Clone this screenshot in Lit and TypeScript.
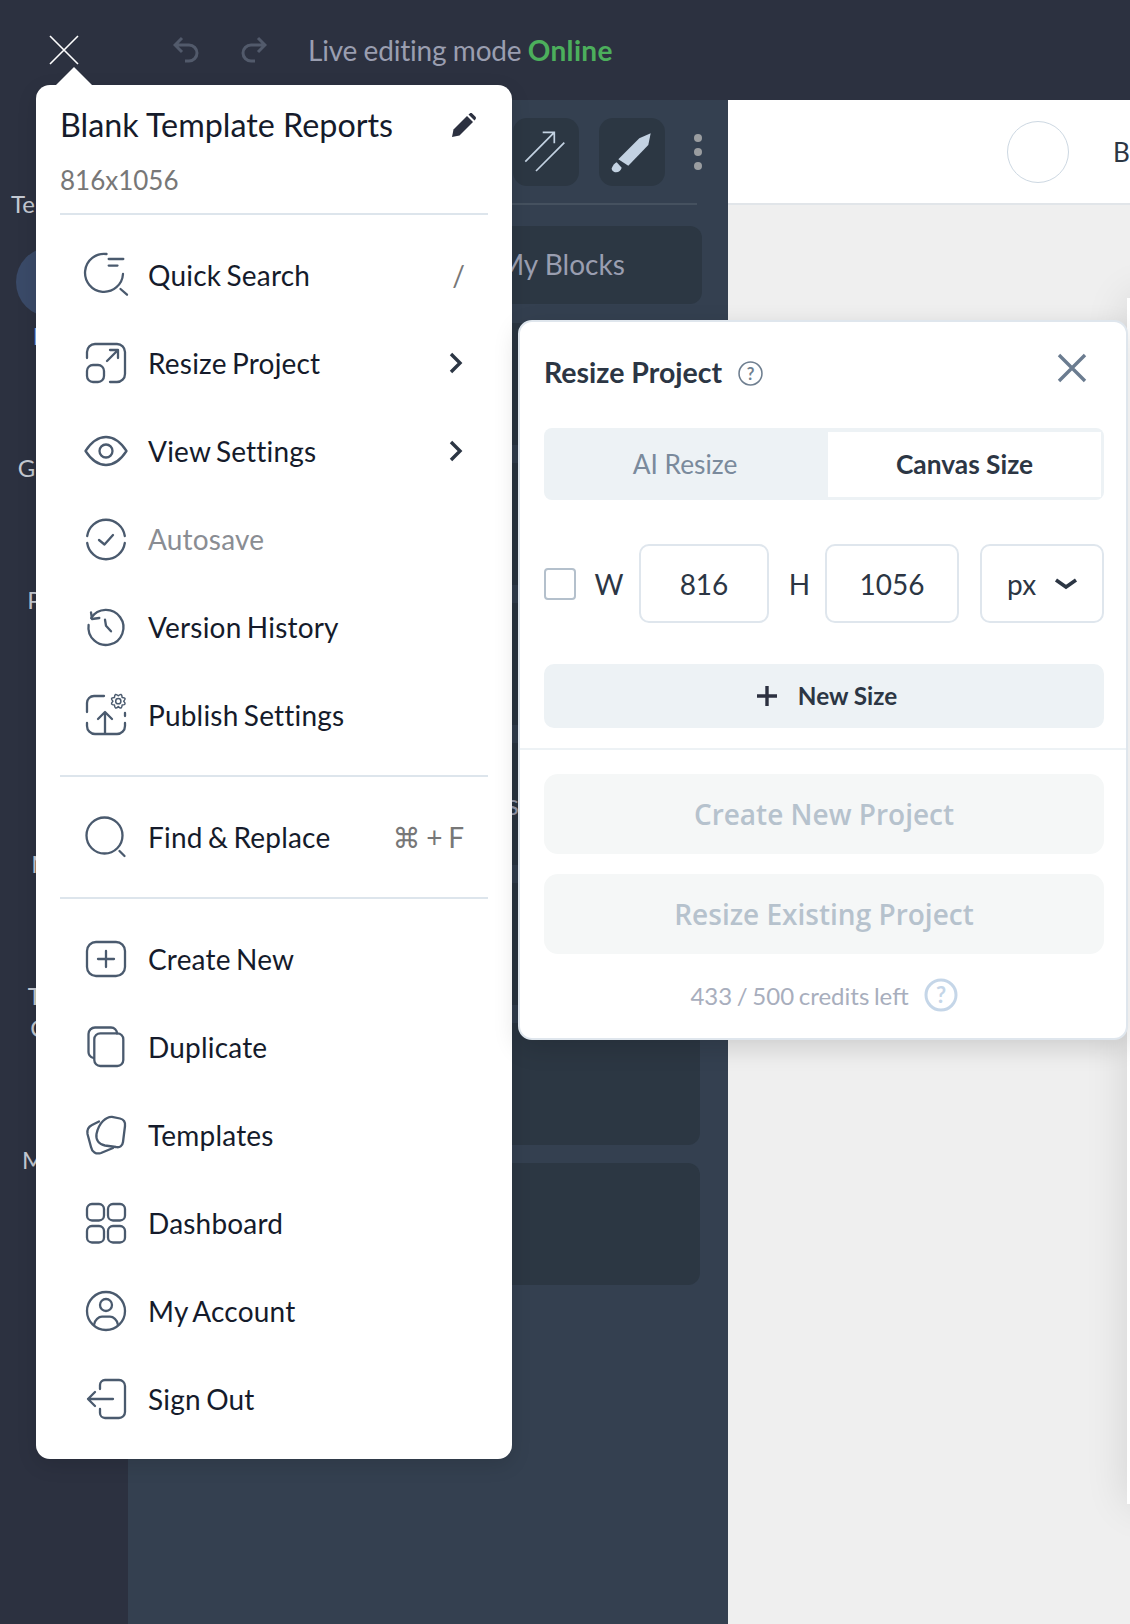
import { LitElement, css, html, svg } from 'lit';
import { customElement } from 'lit/decorators.js';

const icon = (body: unknown) => html`<svg class="ico" viewBox="-2 -2 44 44">${body}</svg>`;

const chevron = html`<svg class="chev" viewBox="0 0 16 24"><path d="M3 3 L12 12 L3 21" /></svg>`;

// eight lobed cog for the publish icon
const gearPath = (cx: number, cy: number) => {
  let d = '';
  for (let i = 0; i < 8; i++) {
    const a = (i * Math.PI) / 4;
    const b = a + Math.PI / 8;
    const c = a + Math.PI / 4;
    const p = (ang: number, r: number) => `${(cx + r * Math.cos(ang)).toFixed(2)} ${(cy + r * Math.sin(ang)).toFixed(2)}`;
    d += i === 0 ? `M${p(a, 5.4)} ` : '';
    d += `Q${p(b, 9.6)} ${p(c, 5.4)} `;
  }
  return d + 'Z';
};

type MenuItem = { label: string; icon: unknown; muted?: boolean; trail?: unknown };

const topItems: MenuItem[] = [
  {
    label: 'Quick Search',
    trail: html`<span class="key">/</span>`,
    icon: svg`<path d="M20.5 -1 A19 19 0 1 0 37 19" /><path d="M22.7 4 H37.3 M22.7 10.6 H31.5" /><path d="M34.5 34 L41 39.7" />`,
  },
  {
    label: 'Resize Project',
    trail: chevron,
    icon: svg`<path d="M1 15 V9 a8 8 0 0 1 8-8 H31 a8 8 0 0 1 8 8 V31 a8 8 0 0 1-8 8 H24" /><rect x="1" y="22" width="17" height="17" rx="6" /><path d="M21 18 L32 7 M24 7 H32 V15" />`,
  },
  {
    label: 'View Settings',
    trail: chevron,
    icon: svg`<path d="M-0.5 20 C6 10 13 6 20 6 C27 6 34 10 40.5 20 C34 30 27 34 20 34 C13 34 6 30 -0.5 20 Z" /><circle cx="20" cy="20" r="6.5" />`,
  },
  {
    label: 'Autosave',
    muted: true,
    icon: svg`<path d="M1.2 17 A19 19 0 0 1 38.8 17" /><path d="M38.8 24 A19 19 0 0 1 1.2 24" /><path d="M13 21 L18.5 25.5 L27 16" />`,
  },
  {
    label: 'Version History',
    icon: svg`<path d="M5.2 11 A17.5 17.5 0 1 1 2.6 18" /><path d="M5 5.3 L6 12 L13.3 11" /><path d="M19 12.7 L20 18.7 L25 24.3" />`,
  },
  {
    label: 'Publish Settings',
    icon: svg`<path d="M1 17 V8 a7 7 0 0 1 7-7 H18" /><path d="M39 18 V21" /><path d="M1 28 V31 a8 8 0 0 0 8 8 H31 a8 8 0 0 0 8-8 V28" /><path d="M19 38 V18 M12 24 L19 17 L26 24" /><circle class="gear" cx="32.3" cy="6.2" r="2.6" /><path class="gear" d="${gearPath(32.3, 6.2)}" />`,
  },
];

const bottomItems: MenuItem[] = [
  {
    label: 'Create New',
    icon: svg`<rect x="1" y="3" width="38" height="34" rx="9" /><path d="M20 12 V28 M12 20 H28" />`,
  },
  {
    label: 'Duplicate',
    icon: svg`<path d="M7.5 31 C4 30 2.5 28 2.5 25 V7 a6.5 6.5 0 0 1 6.5-6.5 H25 a6 6 0 0 1 6 6" /><rect x="8.3" y="6.3" width="29" height="32.7" rx="6" />`,
  },
  {
    label: 'Templates',
    icon: svg`<path d="M17 6 C20 3 22 1.5 26 1.8 L34 3.5 C38 4.5 39.5 7 39 11 L37 27 C36.5 31 33.5 33 30 32 L19 30.5 C13 29.5 9.5 25 10.5 19 C11.5 14 14 9 17 6 Z" /><path d="M13 6.5 L6 10 C2 12 0.8 15 1.5 19 L5 32 C6 37 10 39.5 15 38 L27 33" />`,
  },
  {
    label: 'Dashboard',
    icon: svg`<rect x="1" y="1" width="17" height="16.5" rx="5" /><rect x="22" y="1" width="17" height="16.5" rx="5" /><rect x="1" y="23" width="17" height="16.5" rx="5" /><rect x="22" y="23" width="17" height="16.5" rx="5" />`,
  },
  {
    label: 'My Account',
    icon: svg`<circle cx="20" cy="20" r="19" /><circle cx="20" cy="14" r="6" /><path d="M8 34 C8.5 28.5 13 25.7 16 25.7 H24 C27 25.7 31.5 28.5 32 34" />`,
  },
  {
    label: 'Sign Out',
    icon: svg`<path d="M14 10 V6 a5 5 0 0 1 5-5 H33 a6 6 0 0 1 6 6 V33 a6 6 0 0 1-6 6 H19 a5 5 0 0 1-5-5 V30" /><path d="M27 20 H2 M9 13 L2 20 L9 27" />`,
  },
];

const findItem: MenuItem = {
  label: 'Find & Replace',
  trail: html`<span class="key find">⌘ + F</span>`,
  icon: svg`<circle cx="18.5" cy="18.5" r="18" /><path d="M33.5 34 L38.5 39" />`,
};

const railItems = ['Templates', 'Brand', 'Graphics', 'Photos', 'Icons', 'Media', 'Theme Colors', 'Manage'];
const blocks = ['', '', '', 'Call to Actions', '', '', ''];

@customElement('app-root')
export class AppRoot extends LitElement {
  static styles = css`
    :host {
      display: block;
      position: relative;
      width: 1130px;
      height: 1624px;
      overflow: hidden;
      font-family: Lato, 'DejaVu Sans', sans-serif;
      background: #efefef;
    }

    .top {
      height: 100px;
      background: #2c3140;
      display: flex;
      align-items: center;
    }
    .top svg {
      fill: none;
      flex: none;
    }
    .close-main {
      width: 30px;
      height: 30px;
      margin-left: 49px;
      stroke: #fff;
      stroke-width: 1.6;
    }
    .undo {
      width: 28px;
      height: 28px;
      margin-left: 94px;
      stroke: #525a6b;
      stroke-width: 3;
    }
    .redo {
      margin-left: 38px;
      transform: scaleX(-1);
    }
    .live {
      margin-left: 41px;
      font-size: 28px;
      letter-spacing: -0.2px;
      word-spacing: -0.5px;
      color: #9a9eb0;
    }
    .live b {
      color: #4caf5c;
      letter-spacing: 0.3px;
    }

    .body {
      display: flex;
      height: 1524px;
    }

    .rail {
      width: 128px;
      flex: none;
      background: #2c3140;
    }
    .rail-item {
      padding-top: 100px;
      font-size: 24px;
      line-height: 32px;
      text-align: center;
      color: #c4c9d2;
    }
    .rail-item:first-child {
      padding-top: 88px;
    }
    .rail-item.active {
      padding-top: 27px;
      color: #8fb4e8;
    }
    .rail-mark {
      width: 70px;
      height: 70px;
      margin: 0 0 3px 16px;
      border-radius: 50%;
      background: #3a4a68;
    }
    .rail-item span {
      display: block;
      width: min-content;
      margin: 0 auto;
    }

    .panel {
      width: 600px;
      flex: none;
      box-sizing: border-box;
      padding: 18px 0 0 20px;
      background: #344050;
    }
    .tools {
      display: flex;
      align-items: center;
      justify-content: flex-end;
      gap: 20px;
      padding-right: 31px;
    }
    .tool {
      width: 66px;
      height: 68px;
      border-radius: 14px;
      background: #2c3743;
      display: flex;
      align-items: center;
      justify-content: center;
    }
    .tool svg {
      width: 48px;
      height: 48px;
      fill: none;
      stroke: #c3d2e2;
      stroke-width: 1.7;
    }
    .tool svg.solid {
      fill: #c3d2e2;
      stroke: none;
    }
    .dots {
      display: flex;
      flex-direction: column;
      gap: 6px;
      margin-left: 9px;
      margin-right: -5px;
    }
    .dots i {
      width: 8px;
      height: 8px;
      border-radius: 50%;
      background: #9a9da0;
    }
    .sep {
      height: 2px;
      margin: 17px 31px 0 0;
      background: #45515f;
    }
    .seg {
      display: flex;
      height: 78px;
      margin: 21px 26px 0 0;
      border-radius: 12px;
      background: #2c3743;
      font-size: 28px;
      color: #9a9eb0;
    }
    .seg span {
      flex: 1;
      display: flex;
      align-items: center;
      justify-content: center;
      padding: 0 4px 2px 0;
    }
    .blocks {
      display: flex;
      flex-direction: column;
      gap: 18px;
      margin: 19px 28px 0 0;
    }
    .block {
      height: 122px;
      padding-left: 12px;
      border-radius: 12px;
      background: #2c3743;
      display: flex;
      align-items: center;
      justify-content: center;
      font-size: 28px;
      color: #9a9eb0;
    }

    .main {
      flex: 1;
      min-width: 0;
      overflow: hidden;
      background: #efefef;
    }
    .bar {
      height: 103px;
      box-sizing: content-box;
      background: #fff;
      border-bottom: 2px solid #e1e5e9;
      display: flex;
      align-items: center;
      padding-left: 279px;
      gap: 44px;
      font-size: 26px;
      color: #2c3644;
      white-space: nowrap;
    }
    .avatar {
      width: 62px;
      height: 62px;
      flex: none;
      box-sizing: border-box;
      border: 1px solid #cdd8e2;
      border-radius: 50%;
    }
    .page {
      width: 816px;
      height: 1206px;
      margin: 93px 0 0 399px;
      background: #fff;
      box-shadow: 0 0 40px rgba(0, 0, 0, 0.12);
    }

    /* project menu, drops from the close button */
    .menu {
      position: absolute;
      left: 36px;
      top: 85px;
      width: 476px;
      box-sizing: border-box;
      padding: 0 24px 16px;
      background: #fff;
      border-radius: 14px;
      box-shadow: 0 6px 20px rgba(0, 0, 0, 0.12);
    }
    .menu::before {
      content: '';
      position: absolute;
      left: 20px;
      top: -18px;
      border-left: 18px solid transparent;
      border-right: 18px solid transparent;
      border-bottom: 18px solid #fff;
    }
    .menu-head {
      display: flex;
      align-items: center;
      justify-content: space-between;
      height: 78px;
      color: #151b2b;
      font-size: 32.3px;
    }
    .pencil {
      width: 24px;
      height: 24px;
      margin: 2px 12px 0 0;
      fill: #2c3140;
    }
    .menu-size {
      font-size: 26px;
      line-height: 28px;
      color: #777;
      margin-top: 3px;
      padding-bottom: 19px;
    }
    .menu hr {
      height: 2px;
      margin: 0;
      border: 0;
      background: #dde5ec;
    }
    .group {
      padding: 16px 0;
    }
    .group.last {
      padding-bottom: 0;
    }
    .row {
      height: 88px;
      display: flex;
      align-items: center;
      padding: 0 23px 0 24px;
      gap: 20px;
      font-size: 28px;
      color: #151b2b;
    }
    .row.muted {
      color: #8a8d93;
    }
    .row .name {
      flex: 1;
      letter-spacing: 0.2px;
      word-spacing: -2px;
    }
    .ico {
      width: 44px;
      height: 44px;
      flex: none;
      overflow: visible;
      fill: none;
      stroke: #4a5a6e;
      stroke-width: 2.3;
      stroke-linecap: round;
      stroke-linejoin: round;
    }
    .gear {
      stroke-width: 1.5;
    }
    .chev {
      width: 16px;
      height: 24px;
      flex: none;
      fill: none;
      stroke: #2c3644;
      stroke-width: 3.4;
      margin-right: 1px;
    }
    .key {
      color: #777;
    }
    .key.find {
      word-spacing: -1.6px;
      margin-right: 1px;
    }

    /* resize dialog */
    .dialog {
      position: absolute;
      left: 518px;
      top: 320px;
      width: 610px;
      height: 720px;
      box-sizing: border-box;
      background: #fff;
      border: 2px solid #dfe6ed;
      border-radius: 14px;
      box-shadow: 0 8px 26px rgba(0, 0, 0, 0.14);
      color: #2c3644;
    }
    .pad {
      padding: 0 22px 0 24px;
    }
    .title {
      display: flex;
      align-items: center;
      height: 102px;
      box-sizing: border-box;
      padding-bottom: 2px;
      margin-bottom: 4px;
      gap: 16px;
      font-size: 28.5px;
      font-weight: 700;
    }
    .title svg {
      flex: none;
      fill: none;
    }
    .help {
      width: 25px;
      height: 25px;
      stroke: #6f7f90;
      margin-top: 2px;
    }
    .help text {
      fill: #6f7f90;
      stroke: none;
      font-size: 16px;
      font-family: Lato, sans-serif;
    }
    .x {
      width: 32px;
      height: 32px;
      margin-left: auto;
      margin-right: 16px;
      margin-top: -8px;
      stroke: #6b7c90;
      stroke-width: 3.4;
    }
    .tabs {
      display: flex;
      height: 72px;
      box-sizing: border-box;
      padding: 4px 3px 3px 0;
      border-radius: 8px;
      background: #edf2f5;
      font-size: 26.3px;
    }
    .tabs div {
      display: flex;
      align-items: center;
      justify-content: center;
      padding-bottom: 2px;
    }
    .tab-off {
      width: 282px;
      color: #7a8a9c;
    }
    .tab-on {
      flex: 1;
      margin-left: 2px;
      background: #fff;
      font-weight: 700;
    }
    .dims {
      display: flex;
      align-items: center;
      margin-top: 44px;
      font-size: 28px;
    }
    .check {
      width: 32px;
      height: 32px;
      flex: none;
      box-sizing: border-box;
      border: 2px solid #b4c0cc;
      border-radius: 4px;
    }
    .letter {
      width: 63px;
      box-sizing: border-box;
      padding-left: 3px;
      text-align: center;
      flex: none;
    }
    .letter.h {
      width: 56px;
      padding-left: 5px;
    }
    .field {
      height: 79px;
      box-sizing: border-box;
      flex: none;
      display: flex;
      align-items: center;
      justify-content: center;
      border: 2px solid #dfe6ed;
      border-radius: 10px;
    }
    .w {
      width: 130px;
    }
    .ht {
      width: 134px;
    }
    .unit {
      width: 124px;
      margin-left: 21px;
      justify-content: flex-start;
      padding-left: 25px;
      gap: 18px;
    }
    .unit svg {
      width: 24px;
      height: 14px;
      fill: none;
      stroke: #2c3644;
      stroke-width: 3.6;
    }
    .new {
      height: 64px;
      margin-top: 41px;
      box-sizing: border-box;
      padding: 0 0 1px 5px;
      display: flex;
      align-items: center;
      justify-content: center;
      gap: 20px;
      border-radius: 10px;
      background: #edf2f5;
      font-size: 24.3px;
      font-weight: 700;
    }
    .new svg {
      width: 22px;
      height: 22px;
      stroke: #2c3140;
      stroke-width: 3.4;
    }
    .rule {
      height: 2px;
      margin-top: 20px;
      background: #edf2f5;
    }
    .big {
      height: 80px;
      display: flex;
      align-items: center;
      justify-content: center;
      border-radius: 14px;
      background: #f5f7f7;
      color: #b6c2cd;
      font-family: 'Open Sans', sans-serif;
      font-size: 28px;
      font-weight: 600;
    }
    .big.one {
      margin-top: 24px;
    }
    .big.two {
      margin-top: 20px;
    }
    .credits {
      display: flex;
      align-items: center;
      justify-content: center;
      gap: 15px;
      margin-top: 24px;
      font-size: 24px;
      word-spacing: -1.5px;
      color: #a8aebd;
    }
    .credits svg {
      width: 34px;
      height: 34px;
      fill: none;
      stroke: #c5d6e8;
      stroke-width: 3;
    }
    .credits text {
      fill: #c5d6e8;
      stroke: none;
      font-size: 22px;
      font-weight: 700;
      font-family: Lato, sans-serif;
    }
  `;

  renderRow(item: MenuItem) {
    return html`<div class="row ${item.muted ? 'muted' : ''}">
      ${icon(item.icon)}<span class="name">${item.label}</span>${item.trail ?? ''}
    </div>`;
  }

  renderRail() {
    return railItems.map((label, i) =>
      i === 1
        ? html`<div class="rail-item active"><div class="rail-mark"></div><span>${label}</span></div>`
        : html`<div class="rail-item"><span>${label}</span></div>`
    );
  }

  render() {
    return html`
      <div class="top">
        <svg class="close-main" viewBox="0 0 30 30"><path d="M1 1 L29 29 M29 1 L1 29" /></svg>
        <svg class="undo" viewBox="0 0 28 28"><path d="M2 9 H16 a8 8 0 0 1 0 16 H12 M9 2 L2 9 L9 16" /></svg>
        <svg class="undo redo" viewBox="0 0 28 28"><path d="M2 9 H16 a8 8 0 0 1 0 16 H12 M9 2 L2 9 L9 16" /></svg>
        <span class="live">Live editing mode <b>Online</b></span>
      </div>

      <div class="body">
        <div class="rail">${this.renderRail()}</div>

        <div class="panel">
          <div class="tools">
            <div class="tool">
              <svg viewBox="-24 -24 48 48"><path d="M-20.7 9.7 L8.3 -19.7 M-3.3 -19.7 H8.3 V-8.7 M-10 19 L18.3 -9.3" /></svg>
            </div>
            <div class="tool">
              <svg class="solid" viewBox="-24 -24 48 48">
                <path d="M18.7 -18.7 L16.3 -7 L-3.7 13.7 L-13.7 7.3 L7.3 -13.7 Z" />
                <path d="M-20.3 16.3 C-19 13 -17 11 -15.3 10.3 L-10.3 15.7 C-11 18 -13 20.3 -16 20.3 C-18.5 20.3 -20.5 18.5 -20.3 16.3 Z" />
              </svg>
            </div>
            <div class="dots"><i></i><i></i><i></i></div>
          </div>
          <div class="sep"></div>
          <div class="seg"><span>Blocks</span><span>My Blocks</span></div>
          <div class="blocks">${blocks.map((b) => html`<div class="block">${b}</div>`)}</div>
        </div>

        <div class="main">
          <div class="bar"><div class="avatar"></div><span>Brand</span></div>
          <div class="page"></div>
        </div>
      </div>

      <div class="menu">
        <div class="menu-head">
          <span>Blank Template Reports</span>
          <svg class="pencil" viewBox="0 0 24 24">
            <path d="M0 24 L1.5 16.5 L15 3 L21 9 L7.5 22.5 Z" />
            <path d="M16.5 1.5 L17.8 0.4 C18.5 -0.1 19.5 -0.1 20.2 0.4 L23.5 3.7 C24.1 4.4 24.1 5.5 23.5 6.2 L22.5 7.5 Z" />
          </svg>
        </div>
        <div class="menu-size">816x1056</div>
        <hr />
        <div class="group">${topItems.map((i) => this.renderRow(i))}</div>
        <hr />
        <div class="group">${this.renderRow(findItem)}</div>
        <hr />
        <div class="group last">${bottomItems.map((i) => this.renderRow(i))}</div>
      </div>

      <div class="dialog">
        <div class="pad">
          <div class="title">
            <span>Resize Project</span>
            <svg class="help" viewBox="0 0 24 24">
              <circle cx="12" cy="12" r="11" stroke-width="1.5" />
              <text x="12" y="18" text-anchor="middle">?</text>
            </svg>
            <svg class="x" viewBox="0 0 32 32"><path d="M3 3 L29 29 M29 3 L3 29" /></svg>
          </div>
          <div class="tabs">
            <div class="tab-off">AI Resize</div>
            <div class="tab-on">Canvas Size</div>
          </div>
          <div class="dims">
            <div class="check"></div>
            <div class="letter">W</div>
            <div class="field w">816</div>
            <div class="letter h">H</div>
            <div class="field ht">1056</div>
            <div class="field unit">
              <span>px</span>
              <svg viewBox="0 0 24 14"><path d="M2 3 L12 10 L22 3" /></svg>
            </div>
          </div>
          <div class="new">
            <svg viewBox="0 0 22 22"><path d="M11 1 V21 M1 11 H21" /></svg>
            <span>New Size</span>
          </div>
        </div>
        <div class="rule"></div>
        <div class="pad">
          <div class="big one">Create New Project</div>
          <div class="big two">Resize Existing Project</div>
          <div class="credits">
            <span>433 / 500 credits left</span>
            <svg viewBox="0 0 34 34">
              <circle cx="17" cy="17" r="15" />
              <text x="17" y="25" text-anchor="middle">?</text>
            </svg>
          </div>
        </div>
      </div>
    `;
  }
}
